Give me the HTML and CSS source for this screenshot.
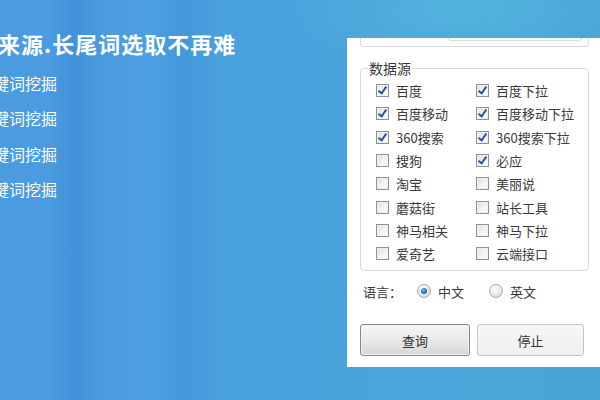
FILE: index.html
```html
<!DOCTYPE html>
<html lang="zh-CN">
<head>
<meta charset="utf-8">
<title>数据源</title>
<link rel="stylesheet" href="styles.css">
</head>
<body>
<div class="stage">
  <div class="promo">
    <h1 class="promo-title">来源.长尾词选取不再难</h1>
    <ul class="promo-list">
      <li>键词挖掘</li>
      <li>键词挖掘</li>
      <li>键词挖掘</li>
      <li>键词挖掘</li>
    </ul>
  </div>
  <div class="panel">
    <div class="top-group"><div class="top-input"></div></div>
    <fieldset class="sources">
      <legend>数据源</legend>
      <div class="grid">
        <label class="item"><span class="cb on"></span>百度</label>
        <label class="item"><span class="cb on"></span>百度下拉</label>
        <label class="item"><span class="cb on"></span>百度移动</label>
        <label class="item"><span class="cb on"></span>百度移动下拉</label>
        <label class="item"><span class="cb on"></span>360搜索</label>
        <label class="item"><span class="cb on"></span>360搜索下拉</label>
        <label class="item"><span class="cb"></span>搜狗</label>
        <label class="item"><span class="cb on"></span>必应</label>
        <label class="item"><span class="cb"></span>淘宝</label>
        <label class="item"><span class="cb"></span>美丽说</label>
        <label class="item"><span class="cb"></span>蘑菇街</label>
        <label class="item"><span class="cb"></span>站长工具</label>
        <label class="item"><span class="cb"></span>神马相关</label>
        <label class="item"><span class="cb"></span>神马下拉</label>
        <label class="item"><span class="cb"></span>爱奇艺</label>
        <label class="item"><span class="cb"></span>云端接口</label>
      </div>
    </fieldset>
    <div class="lang">
      <span class="lang-label">语言：</span>
      <span class="radio on"></span><span class="lang-text">中文</span>
      <span class="radio second"></span><span class="lang-text">英文</span>
    </div>
    <div class="buttons">
      <button class="btn primary">查询</button>
      <button class="btn">停止</button>
    </div>
  </div>
</div>
</body>
</html>
```

FILE: styles.css
```css
html, body {
  margin: 0;
  padding: 0;
}
body {
  width: 600px;
  height: 400px;
  overflow: hidden;
  font-family: "Noto Sans CJK SC", "Noto Sans", sans-serif;
  background:
    radial-gradient(ellipse 180px 60px at 470px 10px, rgba(90, 190, 225, 0.55), rgba(90, 190, 225, 0) 100%),
    linear-gradient(90deg,
      #4a9be0 0px, #4a9be0 50px, #4391d8 75px, #4a9ce0 105px,
      #4da0e1 150px, #4398d9 185px, #49a0dd 215px, #4aa3dc 300px,
      #4aa6da 450px, #48a5d6 600px);
}
.stage {
  display: flex;
  height: 400px;
}
.promo {
  width: 347px;
  flex: none;
  color: #fff;
  overflow: hidden;
}
.promo-title {
  margin: 30px 0 0 -2px;
  font-size: 22px;
  line-height: 26px;
  font-weight: bold;
  letter-spacing: 1px;
  white-space: nowrap;
}
.promo-list {
  list-style: none;
  margin: 16px 0 0 -7px;
  padding: 0;
  font-size: 16px;
}
.promo-list li {
  height: 35.3px;
  line-height: 22px;
  white-space: nowrap;
}
.panel {
  margin-top: 38px;
  width: 253px;
  height: 329px;
  background: #fff;
  box-sizing: border-box;
  padding: 0 11px 0 13px;
  color: #3a3a3a;
  font-size: 13px;
}
.top-group {
  height: 8px;
  border: 1px solid #d3dae2;
  border-top: none;
  border-radius: 0 0 4px 4px;
  padding: 0 6px 0 87px;
}
.top-input {
  height: 2px;
  border: 1px solid #d8dde3;
  border-top: none;
  border-radius: 0 0 3px 3px;
}
.sources {
  margin: 14px 0 0 0;
  padding: 3px 0 5px 15px;
  border: 1px solid #d3dbe4;
  border-radius: 4px;
  min-width: 0;
}
.sources legend {
  margin-left: -8px;
  padding: 0 1px;
  font-size: 14px;
  line-height: 15px;
  color: #3a3a3a;
}
.grid {
  display: grid;
  grid-template-columns: 100px 1fr;
  grid-auto-rows: 23.3px;
}
.item {
  display: flex;
  align-items: center;
  white-space: nowrap;
  line-height: 15px;
}
.cb {
  width: 11px;
  height: 11px;
  border: 1px solid #8f9192;
  background: linear-gradient(135deg, #dcdcdc 0%, #f4f4f4 55%, #ffffff 100%);
  box-shadow: inset 0 0 0 1px #f0f0f0;
  margin-right: 7px;
  flex: none;
  position: relative;
}
.cb.on::after {
  content: "";
  position: absolute;
  left: 3px;
  top: 0px;
  width: 3px;
  height: 7px;
  border: solid #2b4fae;
  border-width: 0 2px 2px 0;
  transform: rotate(35deg);
}
.lang {
  display: flex;
  align-items: center;
  height: 20px;
  margin-top: 10px;
  padding-left: 3px;
}
.lang-label {
  width: 39px;
}
.radio {
  width: 12px;
  height: 12px;
  border-radius: 50%;
  border: 1px solid #a9acb0;
  background: radial-gradient(circle at 40% 35%, #ffffff 0%, #e4e4e4 60%, #cfcfcf 100%);
  margin-left: 15px;
  margin-right: 7px;
  position: relative;
  flex: none;
}
.radio.second {
  margin-left: 25px;
}
.radio.on::after {
  content: "";
  position: absolute;
  left: 3px;
  top: 3px;
  width: 6px;
  height: 6px;
  border-radius: 50%;
  background: radial-gradient(circle at 40% 35%, #6cc0f0 0%, #1a78c2 55%, #0d5a9c 100%);
}
.buttons {
  display: flex;
  gap: 7px;
  margin-top: 23px;
}
.btn {
  height: 32px;
  font-family: "Noto Sans CJK SC", "Noto Sans", sans-serif;
  font-size: 13px;
  color: #333;
  border-radius: 3px;
  padding: 0;
}
.btn.primary {
  width: 110px;
  border: 1px solid #868686;
  background: linear-gradient(#f6f6f6 0%, #e9e9e9 50%, #d6d6d6 100%);
  box-shadow: inset 0 0 0 1px #f4f4f4;
}
.btn:not(.primary) {
  width: 107px;
  border: 1px solid #c4c6c8;
  background: linear-gradient(#f7f7f7, #efefef);
}
```
